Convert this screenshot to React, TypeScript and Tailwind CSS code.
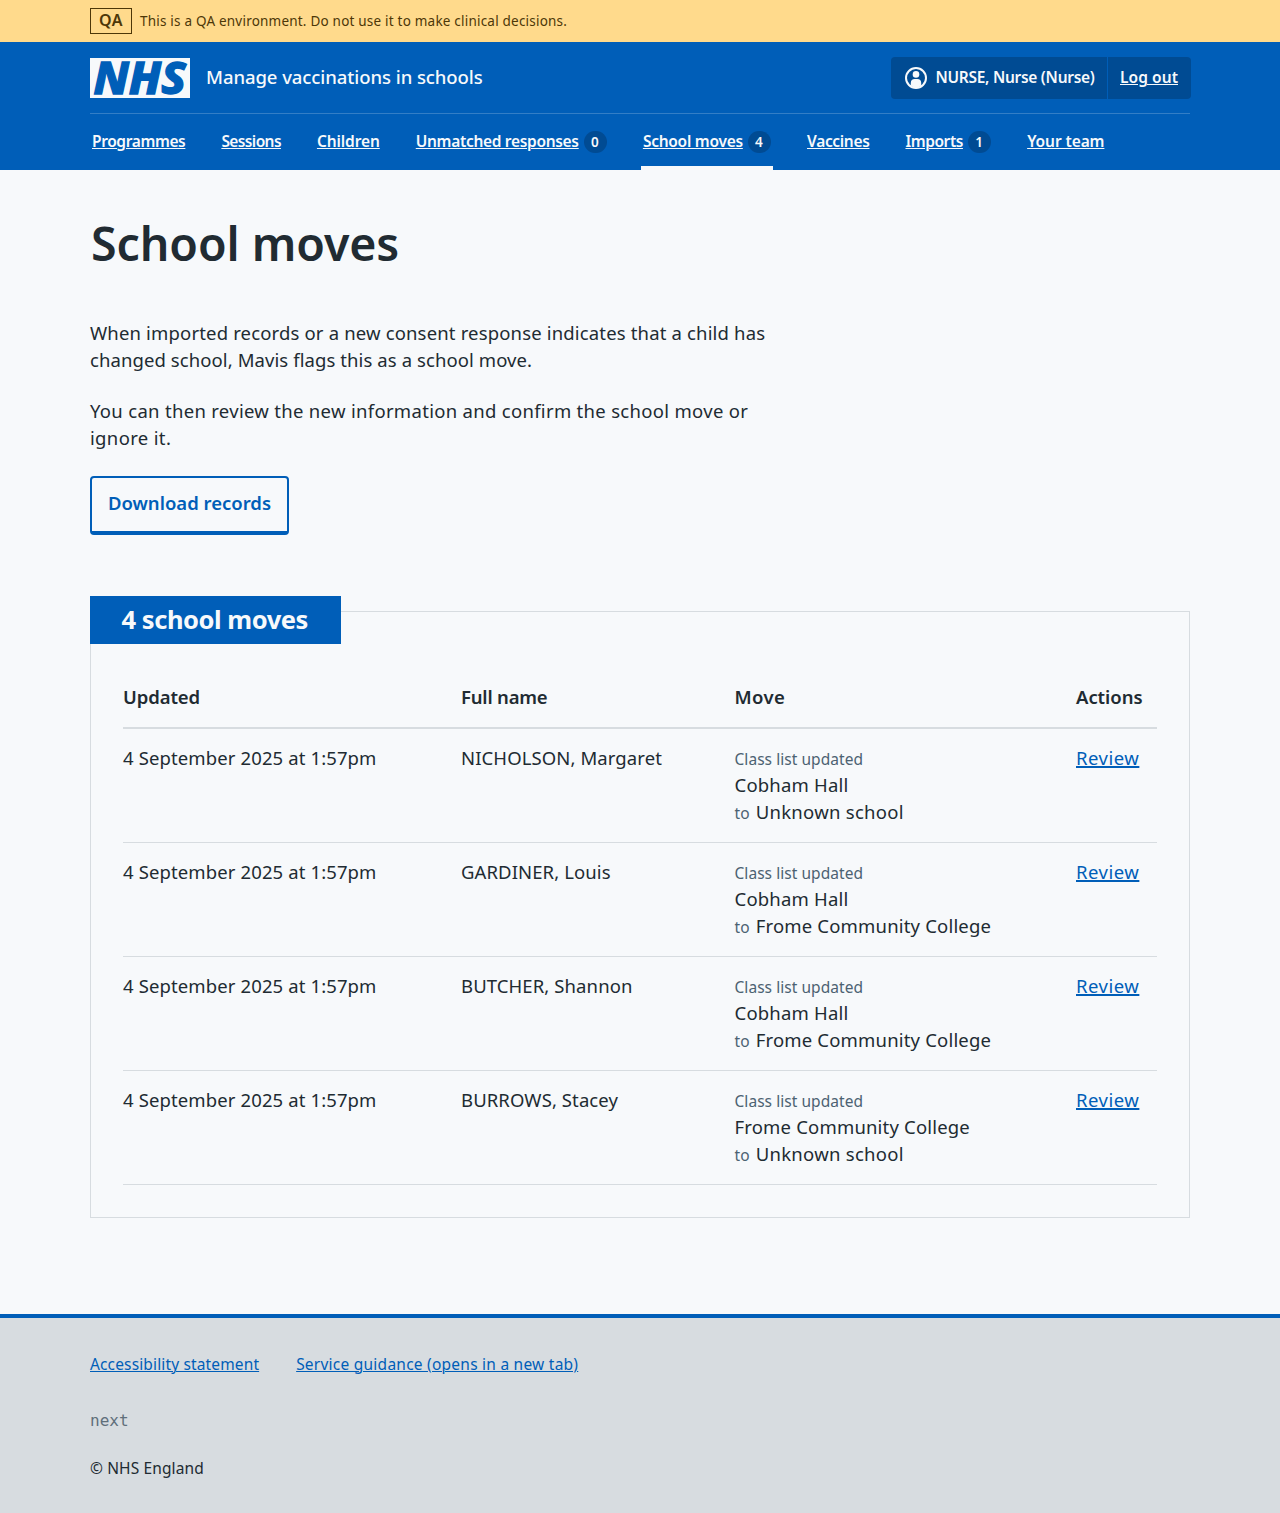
import type { ReactNode } from 'react';

const navLink = 'underline decoration-1 underline-offset-1';

function NavItem({ label, tracking, count, current }: { label: string; tracking: string; count?: number; current?: boolean }) {
  return (
    <li className="relative flex h-14 items-start pt-4">
      <a href="#" className={`${navLink} ${tracking}`}>{label}</a>
      {count !== undefined && (
        <span className="ml-[5px] mt-px flex h-[22px] w-[23.2px] items-center justify-center rounded-full bg-[#004b93] pr-px text-[13.5px] leading-[22px] no-underline">{count}</span>
      )}
      {current && <span className="absolute bottom-0 -left-0.5 -right-0.5 h-1 bg-[#f7f9fb]" />}
    </li>
  );
}

type Move = { name: string; from: ReactNode; to: ReactNode };

const cobham = <span className="tracking-[0.2px]">Cobham Hall</span>;
const unknown = <span className="tracking-[0.28px]">Unknown school</span>;
const frome = <span className="tracking-[0.18px]">Frome Community College</span>;

const moves: Move[] = [
  { name: 'NICHOLSON, Margaret', from: cobham, to: unknown },
  { name: 'GARDINER, Louis', from: cobham, to: frome },
  { name: 'BUTCHER, Shannon', from: cobham, to: frome },
  { name: 'BURROWS, Stacey', from: frome, to: unknown },
];

function Logo() {
  return (
    <svg className="h-10 w-[100px]" viewBox="0 0 100 40" role="img" aria-label="NHS">
      <rect width="100" height="40" fill="#f7f9fb" />
      <text x="3.4" y="35.8" textLength="92.5" lengthAdjust="spacingAndGlyphs" fill="#005eb8" stroke="#005eb8" strokeWidth="1.3" fontFamily="Noto Sans, sans-serif" fontStyle="italic" fontWeight="800" fontSize="44.5">NHS</text>
    </svg>
  );
}

function UserIcon() {
  return (
    <svg className="size-6" viewBox="0 0 24 24" fill="none">
      <circle cx="12" cy="12" r="10" stroke="#f7f9fb" strokeWidth="2" />
      <circle cx="12" cy="8.4" r="3.3" fill="#f7f9fb" />
      <path d="M6.8 19.5V17a4 4 0 0 1 4-4h2.4a4 4 0 0 1 4 4v2.5A10 10 0 0 1 12 22a10 10 0 0 1-5.2-2.5Z" fill="#f7f9fb" />
    </svg>
  );
}

export default function App() {
  return (
    <div className="min-h-[1513px] bg-[#f7f9fb] font-['Noto_Sans',sans-serif] text-[18.5px] leading-[27px] text-[#212b32]">
      <div className="h-[42px] bg-[#ffda8c] pt-2 text-[#4d3708]">
        <div className="mx-auto flex w-[1100px] gap-2">
          <strong className="h-[26px] w-[42px] border border-[#4d3708] text-center text-base leading-[22px] font-semibold tracking-[0.5px]">QA</strong>
          <span className="pt-1 text-[13.5px] leading-[18px] tracking-[0.21px]">This is a QA environment. Do not use it to make clinical decisions.</span>
        </div>
      </div>

      <header className="h-32 bg-[#005eb8] text-[#f7f9fb]">
        <div className="mx-auto w-[1100px]">
          <div className="flex h-[72px] items-start border-b border-[#337ec6]">
            <a href="#" className="mt-4 flex gap-4">
              <Logo />
              <span className="pt-1.5 leading-[25px] font-medium tracking-[-0.07px]">Manage vaccinations in schools</span>
            </a>
            <div className="mt-[15px] -mr-px ml-auto flex h-[42px] w-[300px] rounded bg-[#004b93] text-[15.5px] leading-[22px] font-semibold whitespace-nowrap">
              <div className="flex w-[217px] items-start border-r border-[#005eb8] pl-[13px]">
                <span className="mt-[9px]"><UserIcon /></span>
                <span className="ml-[7.5px] pt-[9px] tracking-[-0.28px]">NURSE, Nurse (Nurse)</span>
              </div>
              <a href="#" className="ml-3 pt-[9px] tracking-[0.07px] underline decoration-1 underline-offset-1">Log out</a>
            </div>
          </div>
          <nav>
            <ul className="flex gap-9 pl-0.5 text-[15.5px] leading-[22px] font-semibold whitespace-nowrap">
              <NavItem label="Programmes" tracking="tracking-[-0.38px]" />
              <NavItem label="Sessions" tracking="tracking-[-0.6px]" />
              <NavItem label="Children" tracking="tracking-[-0.1px]" />
              <NavItem label="Unmatched responses" tracking="tracking-[-0.31px]" count={0} />
              <NavItem label="School moves" tracking="tracking-[-0.26px]" count={4} current />
              <NavItem label="Vaccines" tracking="tracking-[-0.33px]" />
              <NavItem label="Imports" tracking="tracking-[-0.44px]" count={1} />
              <NavItem label="Your team" tracking="tracking-[-0.09px]" />
            </ul>
          </nav>
        </div>
      </header>

      <main className="mx-auto w-[1100px] pt-[41px]">
        <h1 className="pl-px text-[46.5px] leading-[64px] font-semibold tracking-[-0.08px]">School moves</h1>
        <div className="mt-11 whitespace-nowrap">
          <p>
            <span className="tracking-[0.16px]">When imported records or a new consent response indicates that a child has</span>
            <br />
            <span className="tracking-[0.09px]">changed school, Mavis flags this as a school move.</span>
          </p>
          <p className="mt-6">
            <span className="tracking-[0.305px]">You can then review the new information and confirm the school move or</span>
            <br />
            <span className="tracking-[0.35px]">ignore it.</span>
          </p>
        </div>
        <button className="mt-[25px] block h-[59px] w-[199px] rounded border-2 border-b-4 border-[#005eb8] pb-4 pt-3 leading-[25px] font-semibold whitespace-nowrap text-[#005eb8]">Download records</button>

        <section className="mt-[76px] border border-[#d7dce0] px-8 pb-8">
          <h2 className="-mt-4 -ml-[33px] h-12 w-[250.7px] bg-[#005eb8] pt-1.5 pl-[31.5px] text-[25.5px] leading-[34px] font-bold tracking-[-0.45px] text-[#f7f9fb]">4 school moves</h2>
          <table className="mt-[39px] w-full table-fixed border-collapse text-left align-top">
            <colgroup>
              <col className="w-[338px]" />
              <col className="w-[273.5px]" />
              <col className="w-[341.5px]" />
              <col />
            </colgroup>
            <thead>
              <tr className="h-[46px] align-top shadow-[inset_0_-2px_0_#d7dce0]">
                <th className="p-0 font-semibold tracking-[-0.1px]">Updated</th>
                <th className="p-0 font-semibold tracking-[-0.2px]">Full name</th>
                <th className="p-0 font-semibold tracking-[0.4px]">Move</th>
                <th className="p-0 font-semibold tracking-[-0.05px]">Actions</th>
              </tr>
            </thead>
            <tbody>
              {moves.map((m) => (
                <tr key={m.name} className="h-[114px] align-top shadow-[inset_0_-1px_0_#d7dce0]">
                  <td className="pt-[15px] tracking-[0.12px]">4 September 2025 at 1:57pm</td>
                  <td className="pt-[15px] tracking-[0.1px]">{m.name}</td>
                  <td className="pt-[15px]">
                    <div className="h-[27px]"><span className="text-[15.5px] tracking-[0.05px] text-[#4c6272]">Class list updated</span></div>
                    <div className="h-[27px]">{m.from}</div>
                    <div className="h-[27px]"><span className="mr-px text-[15.5px] tracking-[0.2px] text-[#4c6272]">to</span> {m.to}</div>
                  </td>
                  <td className="pt-[15px]"><a href="#" className="tracking-[0.5px] text-[#005eb8] underline decoration-2 underline-offset-1">Review</a></td>
                </tr>
              ))}
            </tbody>
          </table>
        </section>
      </main>

      <footer className="mt-24 h-[199px] border-t-4 border-[#005eb8] bg-[#d7dce0] pt-[35px] text-[15.5px] leading-[22px]">
        <div className="mx-auto w-[1100px]">
          <div className="flex gap-[37px] text-[#005eb8]">
            <a href="#" className="tracking-[0.14px] underline decoration-1 underline-offset-1">Accessibility statement</a>
            <a href="#" className="tracking-[0.24px] underline decoration-1 underline-offset-1">Service guidance (opens in a new tab)</a>
          </div>
          <p className="mt-9 font-['DejaVu_Sans_Mono',monospace] text-base leading-[19px] text-[#5f6f7b]">next</p>
          <p className="mt-[27px] tracking-[0.12px]">© NHS England</p>
        </div>
      </footer>
    </div>
  );
}
